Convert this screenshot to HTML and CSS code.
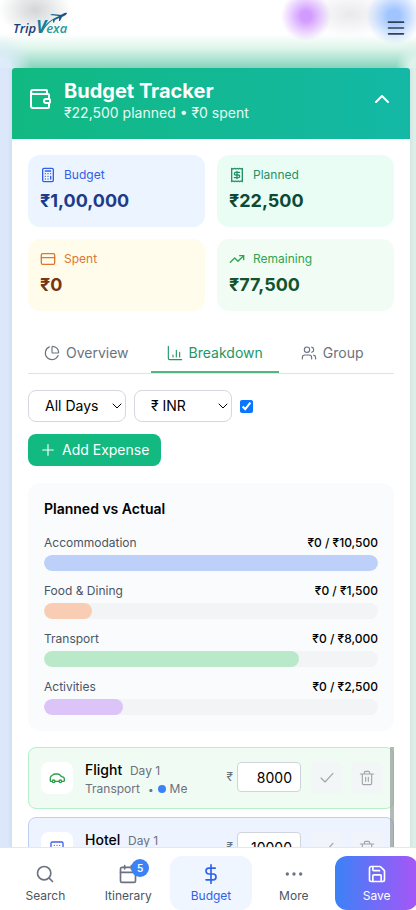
FILE: index.html
```html
<!DOCTYPE html>
<html lang="en">
<head>
<meta charset="utf-8">
<meta name="viewport" content="width=device-width, initial-scale=1">
<title>TripVexa Budget Tracker</title>
<link rel="stylesheet" href="styles.css">
</head>
<body>
<header class="topbar">
  <a class="logo" href="#" aria-label="TripVexa">
    <svg width="56" height="28" viewBox="0 0 56 28">
      <defs>
        <linearGradient id="fly" x1="0" y1="1" x2="1" y2="0"><stop offset="0" stop-color="#18918f"/><stop offset="1" stop-color="#174b86"/></linearGradient>
      </defs>
      <text class="logo-text" x="0" y="22"><tspan class="logo-trip">Trip</tspan><tspan class="logo-v">V</tspan><tspan class="logo-exa">exa</tspan></text>
      <path fill="url(#fly)" d="M28 21C32 13 37 9 46 5C50 3 52 1 54 2C54 3 52 5 49 6L47 10L46 10L46 7L42 9L41 12L40 11L40 9C35 12 32 16 29 22ZM46 5L37 4L39 3L49 4Z"/>
    </svg>
  </a>
  <button class="menu" type="button" aria-label="Menu">
    <svg class="icon" width="20" height="20" viewBox="0 0 24 24"><path d="M3 5h18M3 12h18M3 19h18"/></svg>
  </button>
</header>

<main class="page">
  <section class="tracker">
    <div class="tracker-head">
      <svg class="icon" width="24" height="24" viewBox="0 0 24 24"><path d="M19 7V4a1 1 0 0 0-1-1H5a2 2 0 0 0 0 4h15a1 1 0 0 1 1 1v4h-3a2 2 0 0 0 0 4h3a1 1 0 0 0 1-1v-2a1 1 0 0 0-1-1"/><path d="M3 5v14a2 2 0 0 0 2 2h15a1 1 0 0 0 1-1v-4"/></svg>
      <div class="tracker-title">
        <h1>Budget Tracker</h1>
        <p>₹22,500 planned • ₹0 spent</p>
      </div>
      <button class="collapse" type="button" aria-label="Collapse"><svg class="icon" width="24" height="24" viewBox="0 0 24 24"><path d="m18 15-6-6-6 6"/></svg></button>
    </div>

    <div class="tracker-body">
      <div class="stats">
        <div class="stat stat-budget">
          <p class="stat-label"><svg class="icon" width="16" height="16" viewBox="0 0 24 24"><rect x="4" y="2" width="16" height="20" rx="2"/><path d="M8 6h8M16 14v4M16 10h.01M12 10h.01M8 10h.01M12 14h.01M8 14h.01M12 18h.01M8 18h.01"/></svg>Budget</p>
          <p class="stat-value">₹1,00,000</p>
        </div>
        <div class="stat stat-planned">
          <p class="stat-label"><svg class="icon" width="16" height="16" viewBox="0 0 24 24"><path d="M4 2v20l2-1 2 1 2-1 2 1 2-1 2 1 2-1 2 1V2l-2 1-2-1-2 1-2-1-2 1-2-1-2 1Z"/><path d="M16 8h-6a2 2 0 1 0 0 4h4a2 2 0 1 1 0 4H8M12 17.500V6.500"/></svg>Planned</p>
          <p class="stat-value">₹22,500</p>
        </div>
        <div class="stat stat-spent">
          <p class="stat-label"><svg class="icon" width="16" height="16" viewBox="0 0 24 24"><rect x="2" y="4" width="20" height="16" rx="2"/><path d="M2 10h20"/></svg>Spent</p>
          <p class="stat-value">₹0</p>
        </div>
        <div class="stat stat-remaining">
          <p class="stat-label"><svg class="icon" width="16" height="16" viewBox="0 0 24 24"><path d="m22 7-8.500 8.500-5-5L2 17"/><path d="M16 7h6v6"/></svg>Remaining</p>
          <p class="stat-value">₹77,500</p>
        </div>
      </div>

      <div class="tabs" role="tablist">
        <button class="tab" type="button" role="tab"><svg class="icon thin" width="16" height="16" viewBox="0 0 24 24"><path d="M21 12c.550 0 1-.450.950-1A10 10 0 0 0 13 2.050c-.550-.050-1 .400-1 .950v8a1 1 0 0 0 1 1z"/><path d="M21.210 15.890A10 10 0 1 1 8 2.830"/></svg>Overview</button>
        <button class="tab active" type="button" role="tab" aria-selected="true"><svg class="icon thin" width="16" height="16" viewBox="0 0 24 24"><path d="M2 2v18a2 2 0 0 0 2 2h18M9 18v-3M14 18V8M19 18v-7"/></svg>Breakdown</button>
        <button class="tab" type="button" role="tab"><svg class="icon thin" width="16" height="16" viewBox="0 0 24 24"><path d="M16 21v-2a4 4 0 0 0-4-4H6a4 4 0 0 0-4 4v2"/><circle cx="9" cy="7" r="4"/><path d="M22 21v-2a4 4 0 0 0-3-3.870M16 3.130a4 4 0 0 1 0 7.750"/></svg>Group</button>
      </div>

      <div class="filters">
        <div class="select">
          <select aria-label="Day"><option>All Days</option></select>
          <svg class="icon" width="10" height="6" viewBox="0 0 10 6"><path d="m1 1 4 4 4-4"/></svg>
        </div>
        <div class="select">
          <select aria-label="Currency"><option>₹ INR</option></select>
          <svg class="icon" width="10" height="6" viewBox="0 0 10 6"><path d="m1 1 4 4 4-4"/></svg>
        </div>
        <input class="check" type="checkbox" checked aria-label="Convert amounts">
      </div>
      <button class="add" type="button"><svg class="icon thin" width="16" height="16" viewBox="0 0 24 24"><path d="M4 12h16M12 4v16"/></svg>Add Expense</button>

      <section class="compare">
        <h2>Planned vs Actual</h2>
        <div class="rows">
          <div><p class="row-label"><span>Accommodation</span><b>₹0 / ₹10,500</b></p><div class="bar"><div class="fill blue" style="width:100%"></div></div></div>
          <div><p class="row-label"><span>Food &amp; Dining</span><b>₹0 / ₹1,500</b></p><div class="bar"><div class="fill orange" style="width:14.3%"></div></div></div>
          <div><p class="row-label"><span>Transport</span><b>₹0 / ₹8,000</b></p><div class="bar"><div class="fill green" style="width:76.2%"></div></div></div>
          <div><p class="row-label"><span>Activities</span><b>₹0 / ₹2,500</b></p><div class="bar"><div class="fill purple" style="width:23.8%"></div></div></div>
        </div>
      </section>

      <div class="expenses">
        <article class="expense transport">
          <div class="badge"><svg class="icon" width="16" height="16" viewBox="0 0 24 24"><path d="M5 17H3a1 1 0 0 1-1-1v-4c0-1 .500-2 1.500-3L6 7c1-1 1.500-1 3-1h4c1 0 2 0 3 1l3 3c3 .500 4 1 4 3v3a1 1 0 0 1-1 1h-2M9 17h6"/><circle cx="7" cy="17" r="2"/><circle cx="17" cy="17" r="2"/></svg></div>
          <div class="info">
            <p class="name">Flight <span>Day 1</span></p>
            <p class="meta"><span>Transport</span><span class="sep">•</span><i class="dot"></i><span>Me</span></p>
          </div>
          <label class="amount">₹<input type="text" value="8000" aria-label="Flight amount"></label>
          <button class="act" type="button" aria-label="Mark paid"><svg class="icon thin" width="16" height="16" viewBox="0 0 24 24"><path d="M21 5 9 18l-6-6"/></svg></button>
          <button class="act" type="button" aria-label="Delete"><svg class="icon thin" width="16" height="16" viewBox="0 0 24 24"><path d="M2 6h20M19 6v14a2 2 0 0 1-2 2H7a2 2 0 0 1-2-2V6M8 6V4a2 2 0 0 1 2-2h4a2 2 0 0 1 2 2v2M10 11v6M14 11v6"/></svg></button>
        </article>
        <article class="expense lodging">
          <div class="badge"><svg class="icon" width="16" height="16" viewBox="0 0 24 24"><rect x="3" y="3" width="18" height="19" rx="2"/><path d="M8 8h.01M12 8h.01M16 8h.01M8 12h.01M12 12h.01M16 12h.01M9 22v-5h6v5"/></svg></div>
          <div class="info">
            <p class="name">Hotel <span>Day 1</span></p>
          </div>
          <label class="amount">₹<input type="text" value="10000" aria-label="Hotel amount"></label>
          <button class="act" type="button" aria-label="Mark paid"><svg class="icon thin" width="16" height="16" viewBox="0 0 24 24"><path d="M21 5 9 18l-6-6"/></svg></button>
          <button class="act" type="button" aria-label="Delete"><svg class="icon thin" width="16" height="16" viewBox="0 0 24 24"><path d="M2 6h20M19 6v14a2 2 0 0 1-2 2H7a2 2 0 0 1-2-2V6M8 6V4a2 2 0 0 1 2-2h4a2 2 0 0 1 2 2v2M10 11v6M14 11v6"/></svg></button>
        </article>
        <div class="thumb"></div>
      </div>
    </div>
  </section>
</main>

<nav class="bottom">
  <div class="bottom-items">
    <a class="item" href="#"><svg class="icon" width="20" height="20" viewBox="0 0 24 24"><circle cx="11" cy="11" r="8"/><path d="m21 21-4-4"/></svg>Search</a>
    <a class="item" href="#"><span class="with-count"><svg class="icon" width="20" height="20" viewBox="0 0 24 24"><path d="M8 2v4M16 2v4M3 10h18"/><rect x="3" y="4" width="18" height="18" rx="2"/></svg><span class="count">5</span></span>Itinerary</a>
    <a class="item current" href="#"><svg class="icon" width="20" height="20" viewBox="0 0 24 24"><path d="M12 1v22M17 5H9.500a3.500 3.500 0 0 0 0 7h5a3.500 3.500 0 0 1 0 7H6"/></svg>Budget</a>
    <a class="item" href="#"><svg class="icon" width="20" height="20" viewBox="0 0 24 24"><g fill="currentColor"><circle cx="4" cy="12" r="1"/><circle cx="12" cy="12" r="1"/><circle cx="20" cy="12" r="1"/></g></svg>More</a>
    <button class="item save" type="button"><svg class="icon" width="20" height="20" viewBox="0 0 24 24"><path d="M15.200 3a2 2 0 0 1 1.400.600l3.800 3.800a2 2 0 0 1 .600 1.400V19a2 2 0 0 1-2 2H5a2 2 0 0 1-2-2V5a2 2 0 0 1 2-2z"/><path d="M17 21v-7a1 1 0 0 0-1-1H8a1 1 0 0 0-1 1v7M7 3v4a1 1 0 0 0 1 1h7"/></svg>Save</button>
  </div>
</nav>
</body>
</html>
```

FILE: styles.css
```css
* { box-sizing: border-box; }
body {
  margin: 0;
  height: 100vh;
  display: flex;
  flex-direction: column;
  font-family: Inter, "Noto Sans", sans-serif;
  font-size: 14px;
  line-height: 20px;
  color: #000;
  background: linear-gradient(90deg, #dbe7fa, #dcefe8);
}
h1, h2, p { margin: 0; }
button, input, select { font: inherit; color: inherit; }
button { border: 0; padding: 0; background: none; }
a { color: inherit; text-decoration: none; }
.icon {
  flex: none;
  display: block;
  fill: none;
  stroke: currentColor;
  stroke-width: 2;
  stroke-linecap: round;
  stroke-linejoin: round;
}
.thin { stroke-width: 1.7; }

.topbar {
  flex: none;
  height: 68px;
  padding: 11px 10px 0 13px;
  display: flex;
  justify-content: space-between;
  align-items: flex-start;
  background:
    radial-gradient(circle at 306px 16px, rgba(205, 145, 255, .9) 5px, rgba(215, 165, 255, 0) 25px),
    radial-gradient(circle at 394px 16px, rgba(150, 190, 255, .9) 6px, rgba(165, 200, 255, 0) 28px),
    radial-gradient(ellipse 42px 24px at 350px 14px, #e9e9ed, rgba(235, 235, 240, 0)),
    radial-gradient(ellipse 36px 26px at 35px 10px, #d3d5d7, rgba(220, 222, 224, 0)),
    radial-gradient(ellipse 32px 34px at 0 100%, #dcecf9 30%, rgba(225, 239, 250, 0)),
    radial-gradient(ellipse 20px 30px at 100% 100%, #def3ec 30%, rgba(225, 245, 240, 0)),
    linear-gradient(#fff 34px, #dff5ec 48px, #86d4bc 68px);
}
.logo-text { font-family: "Open Sans", sans-serif; font-size: 13px; font-style: italic; font-weight: 600; }
.logo-trip { fill: #173f78; }
.logo-v { font-size: 17px; font-weight: 700; fill: #137d9b; }
.logo-exa { fill: #229a9f; }
.menu { margin-top: 7px; color: #334155; }

.page {
  flex: 1;
  min-height: 0;
  overflow: auto;
  scrollbar-width: none;
  padding: 0 6px 0 12px;
}
.tracker {
  background: #fff;
  border-radius: 3px 3px 0 0;
  box-shadow: 0 0 4px rgba(80, 100, 140, .15);
}
.tracker-head {
  display: flex;
  align-items: flex-start;
  gap: 12px;
  padding: 11px 16px 16px;
  color: #fff;
  border-radius: 3px 3px 0 0;
  background: linear-gradient(90deg, #11b981, #14b8a6);
}
.tracker-title { flex: 1; }
.tracker-title h1 { font-size: 20px; line-height: 24px; font-weight: 700; }
.tracker-title p { color: #e5faf2; }
.collapse, .tracker-head > .icon { margin-top: 8px; }

.tracker-body { padding: 16px; }
.stats { display: grid; grid-template-columns: 1fr 1fr; gap: 12px; }
.stat { padding: 12px; border-radius: 12px; }
.stat-label {
  display: flex;
  align-items: center;
  gap: 8px;
  font-size: 12px;
  line-height: 16px;
}
.stat-value { margin-top: 4px; font-size: 18px; line-height: 28px; font-weight: 700; }
.stat-budget { background: #ebf4ff; color: #1e3a8a; }
.stat-budget .stat-label { color: #315fe8; }
.stat-planned { background: #eafdf5; color: #0b4a36; }
.stat-planned .stat-label { color: #239268; }
.stat-spent { background: #fffceb; color: #78350f; }
.stat-spent .stat-label { color: #dc7633; }
.stat-remaining { background: #f1fcf5; color: #14532d; }
.stat-remaining .stat-label { color: #2fa44f; }

.tabs {
  display: flex;
  gap: 6px;
  margin-top: 24px;
  border-bottom: 1px solid #dfe2e6;
}
.tab {
  display: flex;
  align-items: center;
  gap: 6px;
  padding: 8px 16px;
  color: #6b7280;
  border-bottom: 2px solid transparent;
}
.tab.active { color: #229765; border-color: #52b583; }

.filters {
  display: flex;
  align-items: center;
  gap: 8px;
  margin-top: 16px;
}
.select { position: relative; width: 98px; }
.select select {
  display: block;
  appearance: none;
  width: 100%;
  height: 32px;
  padding: 0 16px;
  border: 1px solid #d5d8df;
  border-radius: 8px;
  background: #fff;
}
.select .icon { position: absolute; right: 4px; top: 13px; stroke-width: 1; pointer-events: none; }
.check { width: 13px; height: 13px; margin: 0; accent-color: #0a75ff; }
.add {
  display: flex;
  align-items: center;
  gap: 6px;
  height: 32px;
  margin-top: 12px;
  padding: 0 12px;
  border-radius: 8px;
  color: #fff;
  background: #12b981;
}

.compare {
  margin-top: 17px;
  padding: 16px;
  border-radius: 12px;
  background: #f9fbfd;
}
.compare h2 { font-size: 14px; line-height: 20px; font-weight: 600; }
.rows { display: grid; gap: 12px; margin-top: 16px; }
.row-label {
  display: flex;
  justify-content: space-between;
  margin-bottom: 4px;
  font-size: 12px;
  line-height: 16px;
  color: #4b5563;
}
.row-label b { font-weight: 500; color: #000; }
.bar { height: 16px; border-radius: 8px; background: #f3f4f6; overflow: hidden; }
.fill { height: 100%; border-radius: 8px; }
.blue { background: #bcd0f9; }
.orange { background: #f8cdb3; }
.green { background: #b9e9c8; }
.purple { background: #dcc3f8; }

.expenses { position: relative; display: grid; gap: 8px; margin-top: 16px; }
.thumb { position: absolute; top: 0; right: 0; bottom: 0; width: 4px; background: rgba(130, 140, 135, .6); }
.expense {
  display: flex;
  align-items: flex-start;
  height: 62px;
  padding: 14px 10px 0 12px;
  border: 1px solid;
  border-radius: 8px;
}
.transport { background: #f0fbf4; border-color: #b6f0c9; }
.lodging { background: #eef4ff; border-color: #bcd0f5; }
.badge {
  display: grid;
  place-items: center;
  width: 32px;
  height: 32px;
  border-radius: 8px;
  background: #fff;
}
.transport .badge { color: #2ba04c; }
.lodging .badge { color: #4460e6; }
.info { flex: 1; min-width: 0; margin-top: -2px; padding-left: 12px; }
.name { font-weight: 500; line-height: 20px; }
.name span { margin-left: 4px; font-size: 12px; color: #6b7280; font-weight: 400; }
.meta { display: flex; align-items: center; gap: 4px; font-size: 12px; line-height: 16px; color: #6b7280; }
.sep { margin-left: 4px; font-size: 10px; }
.dot { width: 8px; height: 8px; border-radius: 50%; background: #3b82f6; }
.amount { display: flex; align-items: center; gap: 4px; margin-right: 10px; font-size: 12px; color: #6b7280; }
.amount input {
  width: 64px;
  height: 30px;
  padding: 0 8px;
  border: 1px solid #cfd4da;
  border-radius: 4px;
  background: #fff;
  color: #000;
  font-size: 14px;
  text-align: right;
}
.act {
  display: grid;
  place-items: center;
  width: 32px;
  height: 32px;
  border-radius: 8px;
  color: #a0a4aa;
  background: rgba(243, 244, 246, .6);
}
.act + .act { margin-left: 8px; }

.bottom {
  flex: none;
  overflow: hidden;
  background: #fff;
  border-top: 1px solid #e5e7eb;
}
.bottom-items {
  display: grid;
  grid-template-columns: repeat(5, 1fr);
  margin-right: -2px;
  padding: 8px 0 0 4px;
}
.item {
  display: flex;
  flex-direction: column;
  align-items: center;
  gap: 4px;
  padding: 8px 0 6px;
  border-radius: 12px;
  font-size: 12px;
  line-height: 16px;
  color: #4b5563;
}
.item .icon { color: #6b7280; }
.current { background: #eff6ff; }
.current, .current .icon { color: #2f62ea; }
.save { background: linear-gradient(90deg, #3b82f6, #a855f7); }
.save, .save .icon { color: #fff; }
.with-count { position: relative; }
.count {
  position: absolute;
  top: -5px;
  right: -11px;
  width: 18px;
  height: 18px;
  border-radius: 50%;
  color: #fff;
  background: #3b82f6;
  font-size: 10px;
  line-height: 18px;
  font-weight: 600;
  text-align: center;
}
```
